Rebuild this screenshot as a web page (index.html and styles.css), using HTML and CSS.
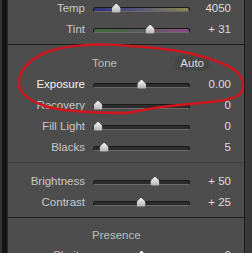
FILE: index.html
```html
<!DOCTYPE html>
<html lang="en">
<head>
  <meta charset="UTF-8">
  <title>Basic - Tone</title>
  <link rel="stylesheet" href="styles.css">
</head>
<body>
  <div class="frame">
    <div class="edge-left"></div>

    <div class="panel">
      <!-- white balance -->
      <div class="group group-wb">
        <div class="row">
          <span class="label">Temp</span>
          <div class="slider"><div class="track track-temp"></div><div class="rail"><span class="thumb" style="left: 21%"></span></div></div>
          <span class="value">4050</span>
        </div>
        <div class="row">
          <span class="label">Tint</span>
          <div class="slider"><div class="track track-tint"></div><div class="rail"><span class="thumb" style="left: 60%"></span></div></div>
          <span class="value">+ 31</span>
        </div>
      </div>

      <!-- tone -->
      <div class="group group-line">
        <div class="head">
          <span class="head-title">Tone</span>
          <span class="auto">Auto</span>
        </div>
        <div class="row active">
          <span class="label">Exposure</span>
          <div class="slider"><div class="track"></div><div class="rail"><span class="thumb" style="left: 50%"></span></div></div>
          <span class="value">0.00</span>
        </div>
        <div class="row">
          <span class="label">Recovery</span>
          <div class="slider"><div class="track"></div><div class="rail"><span class="thumb" style="left: 0%"></span></div></div>
          <span class="value">0</span>
        </div>
        <div class="row">
          <span class="label">Fill Light</span>
          <div class="slider"><div class="track"></div><div class="rail"><span class="thumb" style="left: 0%"></span></div></div>
          <span class="value">0</span>
        </div>
        <div class="row">
          <span class="label">Blacks</span>
          <div class="slider"><div class="track"></div><div class="rail"><span class="thumb" style="left: 7%"></span></div></div>
          <span class="value">5</span>
        </div>
      </div>

      <div class="group group-soft">
        <div class="row">
          <span class="label">Brightness</span>
          <div class="slider"><div class="track"></div><div class="rail"><span class="thumb" style="left: 65.5%"></span></div></div>
          <span class="value">+ 50</span>
        </div>
        <div class="row">
          <span class="label">Contrast</span>
          <div class="slider"><div class="track"></div><div class="rail"><span class="thumb" style="left: 49.5%"></span></div></div>
          <span class="value">+ 25</span>
        </div>
      </div>

      <!-- presence -->
      <div class="group group-line">
        <div class="head head-last">
          <span class="head-title">Presence</span>
        </div>
        <div class="row">
          <span class="label">Clarity</span>
          <div class="slider"><div class="track"></div><div class="rail"><span class="thumb" style="left: 50%"></span></div></div>
          <span class="value">0</span>
        </div>
      </div>
    </div>

    <div class="edge-right"></div>

    <!-- hand drawn annotation -->
    <svg class="mark" width="252" height="253" viewBox="0 0 252 253">
      <path d="M128 113 C 100 113, 60 112, 42 105 C 26 99, 17 90, 19 80 C 21 68, 32 57, 50 51 C 70 45, 100 43, 130 46 C 170 48, 205 55, 228 66 C 242 73, 246 84, 241 93 C 236 99, 222 101, 200 103 C 175 105, 150 108, 128 113"
            fill="none" stroke="#d0161e" stroke-width="2.5" stroke-linecap="round"/>
    </svg>
  </div>
</body>
</html>
```

FILE: styles.css
```css
body {
  margin: 0;
  background: #3a3a3a;
  font-family: "Liberation Sans", Arial, sans-serif;
  font-size: 11.5px;
  color: #c8c8c8;
  overflow: hidden;
}

.frame {
  position: relative;
  display: flex;
  width: 252px;
  height: 253px;
  overflow: hidden;
}

.edge-left {
  width: 5px;
  flex: none;
  background: #131313;
  border-left: 2px solid #333;
  border-right: 1px solid #2a2a2a;
}

.edge-right {
  width: 7px;
  flex: none;
  background: #393939;
  border-left: 1px solid #1b1b1b;
}

.panel {
  width: 236px;
  flex: none;
  background: #4d4d4d;
}

/* sections */
.group {
  padding-bottom: 5px;
}
.group-wb {
  margin-top: -3px;
}
.group-line {
  border-top: 1px solid #1e1e1e;
  padding-top: 7px;
}
.group-soft {
  border-top: 1px solid #3e3e3e;
  padding-top: 7px;
}

.head {
  display: flex;
  align-items: center;
  height: 21px;
  padding-left: 84px;
  padding-right: 35px;
  color: #bdbdbd;
}
.head-last {
  height: 19px;
}
.auto {
  margin-left: auto;
  padding: 2px 5px;
  border-radius: 7px;
  background: #464646;
  color: #dcdcdc;
}

/* slider rows */
.row {
  display: grid;
  grid-template-columns: 85px 97px 41px;
  align-items: center;
  height: 21px;
}
.label {
  text-align: right;
  padding-right: 8px;
}
.row.active .label {
  color: #f2f2f2;
}
.value {
  text-align: right;
  color: #dedede;
}

.slider {
  position: relative;
  height: 9px;
  margin-top: 1px;
}
.track {
  position: absolute;
  left: 0;
  right: 0;
  bottom: 1px;
  height: 3px;
  background: #2c2c2c;
  border: 1px solid #1a1a1a;
  border-bottom-color: #6a6a6a;
  border-radius: 3px;
}
.track-temp {
  background: linear-gradient(to right, #30307a, #55557a 45%, #8a8a4a);
}
.track-tint {
  background: linear-gradient(to right, #3a6a3a, #5a5a5a 50%, #8a4a8a);
}

.rail {
  position: absolute;
  top: 0;
  bottom: 0;
  left: 5px;
  right: 5px;
}
.thumb {
  position: absolute;
  bottom: 0;
  width: 9px;
  height: 9px;
  transform: translateX(-50%);
  background: linear-gradient(#f4f4f4, #b0b0b0);
  clip-path: polygon(50% 0, 100% 50%, 100% 100%, 0 100%, 0 50%);
  border-radius: 0 0 2px 2px;
}

.mark {
  position: absolute;
  left: 0;
  top: 0;
  pointer-events: none;
}
```
